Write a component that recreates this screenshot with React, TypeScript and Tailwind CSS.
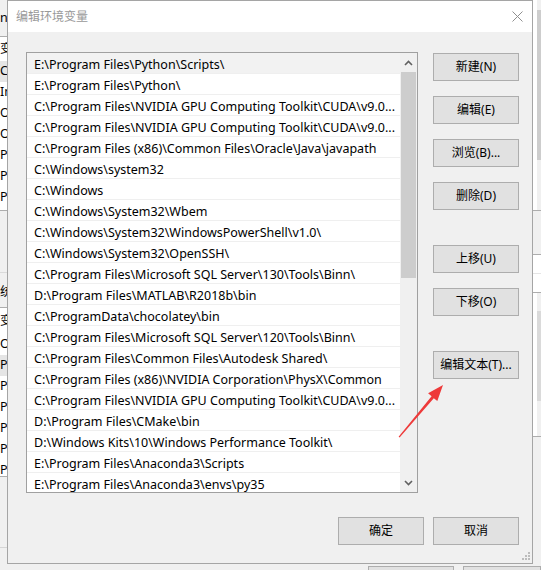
import React from "react";

const rows = [
  "E:\\Program Files\\Python\\Scripts\\",
  "E:\\Program Files\\Python\\",
  "C:\\Program Files\\NVIDIA GPU Computing Toolkit\\CUDA\\v9.0...",
  "C:\\Program Files\\NVIDIA GPU Computing Toolkit\\CUDA\\v9.0...",
  "C:\\Program Files (x86)\\Common Files\\Oracle\\Java\\javapath",
  "C:\\Windows\\system32",
  "C:\\Windows",
  "C:\\Windows\\System32\\Wbem",
  "C:\\Windows\\System32\\WindowsPowerShell\\v1.0\\",
  "C:\\Windows\\System32\\OpenSSH\\",
  "C:\\Program Files\\Microsoft SQL Server\\130\\Tools\\Binn\\",
  "D:\\Program Files\\MATLAB\\R2018b\\bin",
  "C:\\ProgramData\\chocolatey\\bin",
  "C:\\Program Files\\Microsoft SQL Server\\120\\Tools\\Binn\\",
  "C:\\Program Files\\Common Files\\Autodesk Shared\\",
  "C:\\Program Files (x86)\\NVIDIA Corporation\\PhysX\\Common",
  "C:\\Program Files\\NVIDIA GPU Computing Toolkit\\CUDA\\v9.0...",
  "D:\\Program Files\\CMake\\bin",
  "D:\\Windows Kits\\10\\Windows Performance Toolkit\\",
  "E:\\Program Files\\Anaconda3\\Scripts",
  "E:\\Program Files\\Anaconda3\\envs\\py35",
];

function Btn({ children, className = "" }: { children: React.ReactNode; className?: string }) {
  return (
    <div
      className={`flex items-center justify-center w-[86px] h-[28px] shrink-0 bg-[#e1e1e1] border border-[#adadad] text-[12px] text-black ${className}`}
    >
      {children}
    </div>
  );
}

function Chevron({ up }: { up?: boolean }) {
  return (
    <svg width="9" height="6" viewBox="0 0 9 6">
      <path
        d={up ? "M1 5 L4.5 1.5 L8 5" : "M1 1 L4.5 4.5 L8 1"}
        stroke="#606060"
        strokeWidth="1.6"
        fill="none"
      />
    </svg>
  );
}

function LeftStrip() {
  const top = ["Ch", "In", "Or", "Or", "Pa", "PH", "Py"];
  const bottom = ["OS", "Pa", "PA", "PC", "PR", "PR", "PR"];
  return (
    <div className="w-[7px] flex flex-col overflow-hidden text-[12.5px] text-black leading-none">
      <div className="h-[36px] flex items-center whitespace-nowrap">n:</div>
      <div className="h-[175px] bg-white border-y border-[#adadad] flex flex-col overflow-hidden">
        <div className="h-[24px] shrink-0 flex items-center whitespace-nowrap">变</div>
        {top.map((t, i) => (
          <div
            key={i}
            className={`h-[21px] shrink-0 flex items-center whitespace-nowrap ${i === 0 ? "bg-[#e5e5e5]" : ""}`}
          >
            {t}
          </div>
        ))}
      </div>
      <div className="h-[61px]" />
      <div className="h-[35px] border-t border-[#dadada] flex items-center whitespace-nowrap pt-[5px]">统</div>
      <div className="h-[170px] bg-white border-y border-[#adadad] flex flex-col overflow-hidden">
        <div className="h-[26px] shrink-0 flex items-center whitespace-nowrap">变</div>
        {bottom.map((t, i) => (
          <div
            key={i}
            className={`h-[21px] shrink-0 flex items-center whitespace-nowrap ${i === 1 ? "bg-[#e5e5e5]" : ""}`}
          >
            {t}
          </div>
        ))}
      </div>
      <div className="h-[70px]" />
      <div className="border-t border-[#d5d5d5]" />
    </div>
  );
}

function RightStrip() {
  return (
    <div className="w-[8px] flex flex-col overflow-hidden">
      <div className="h-[211px] bg-white border-b border-[#adadad] flex justify-end">
        <div className="w-[4px] bg-[#f0f0f0] flex flex-col">
          <div className="h-[150px] mt-[10px] bg-[#cdcdcd]" />
        </div>
      </div>
      <div className="h-[43px]" />
      <div className="h-[183px] bg-white border-y border-[#adadad] flex flex-col">
        <div className="h-[19px] border-b border-[#e5e5e5]" />
        <div className="h-[19px] border-b border-[#adadad]" />
        <div className="flex-1 flex justify-end">
          <div className="w-[4px] bg-[#f0f0f0] flex flex-col">
            <div className="h-[90px] mt-[18px] bg-[#dadada]" />
          </div>
        </div>
      </div>
    </div>
  );
}

function ParentWindow() {
  return (
    <div className="flex flex-col h-full">
      <div className="flex h-[564px]">
        <LeftStrip />
        <div className="flex-1" />
        <RightStrip />
      </div>
      <div className="flex h-[6px] pt-[2px]">
        <div className="w-[368px]" />
        <div className="w-[86px] bg-[#e1e1e1] border border-b-0 border-[#adadad]" />
        <div className="w-[9px]" />
        <div className="flex-1 bg-[#e1e1e1] border border-b-0 border-[#adadad]" />
      </div>
    </div>
  );
}

function Dialog() {
  return (
    <div className="absolute left-[7px] top-0 w-[526px] h-[564px] border border-[#a5a5a5] bg-[#f0f0f0] flex flex-col">
      <div className="h-[31px] bg-white flex items-center justify-between pl-[8px] pr-[9px] shrink-0">
        <span className="text-[12px] text-[#999999]">编辑环境变量</span>
        <svg width="11" height="11" viewBox="0 0 11 11">
          <path d="M0.5 0.5 L10.5 10.5 M10.5 0.5 L0.5 10.5" stroke="#8f8f8f" strokeWidth="1" />
        </svg>
      </div>
      <div className="flex-1 flex flex-col pl-[18px] pr-[13px] pt-[20px]">
        <div className="flex gap-[15px]">
          <div className="w-[392px] h-[441px] border border-[#a0a0a0] bg-white flex">
            <div className="flex-1 flex flex-col overflow-hidden">
              {rows.map((r, i) => (
                <div
                  key={i}
                  className={`h-[21px] shrink-0 border-b border-[#efefef] pl-[7px] pt-[4px] flex items-center whitespace-nowrap overflow-hidden text-[12.5px] text-black ${i === 0 ? "bg-[#f2f2f2]" : ""}`}
                >
                  {r}
                </div>
              ))}
            </div>
            <div className="w-[17px] bg-[#f0f0f0] flex flex-col">
              <div className="h-[19px] flex items-center justify-center">
                <Chevron up />
              </div>
              <div className="h-[206px] mx-[1px] bg-[#cdcdcd]" />
              <div className="flex-1" />
              <div className="h-[19px] flex items-center justify-center">
                <Chevron />
              </div>
            </div>
          </div>
          <div className="flex flex-col pt-[1px]">
            <Btn>新建(N)</Btn>
            <Btn className="mt-[15px]">编辑(E)</Btn>
            <Btn className="mt-[15px]">浏览(B)...</Btn>
            <Btn className="mt-[15px]">删除(D)</Btn>
            <Btn className="mt-[35px]">上移(U)</Btn>
            <Btn className="mt-[15px]">下移(O)</Btn>
            <Btn className="mt-[35px]">编辑文本(T)...</Btn>
          </div>
        </div>
        <div className="flex justify-end gap-[9px] mt-[24px]">
          <Btn>确定</Btn>
          <Btn>取消</Btn>
        </div>
      </div>
      <svg className="absolute right-[1px] bottom-[2px]" width="9" height="9" viewBox="0 0 9 9">
        <rect x="6" y="0" width="2" height="2" fill="#bcbcbc" />
        <rect x="3" y="3" width="2" height="2" fill="#bcbcbc" />
        <rect x="6" y="3" width="2" height="2" fill="#bcbcbc" />
        <rect x="0" y="6" width="2" height="2" fill="#bcbcbc" />
        <rect x="3" y="6" width="2" height="2" fill="#bcbcbc" />
        <rect x="6" y="6" width="2" height="2" fill="#bcbcbc" />
      </svg>
    </div>
  );
}

function Arrow() {
  return (
    <svg className="absolute left-0 top-0 pointer-events-none" width="541" height="570" viewBox="0 0 541 570">
      <polygon
        points="398.6,436.7 431.6,396.2 428.1,393.3 443,385 437.3,401.1 433.8,398.2 399.6,437.4"
        fill="#ee3a3a"
      />
    </svg>
  );
}

export default function App() {
  return (
    <div className="relative w-[541px] h-[570px] overflow-hidden bg-[#f0f0f0] font-['Segoe_UI','Noto_Sans','Noto_Sans_CJK_SC',sans-serif]">
      <ParentWindow />
      <Dialog />
      <Arrow />
    </div>
  );
}
